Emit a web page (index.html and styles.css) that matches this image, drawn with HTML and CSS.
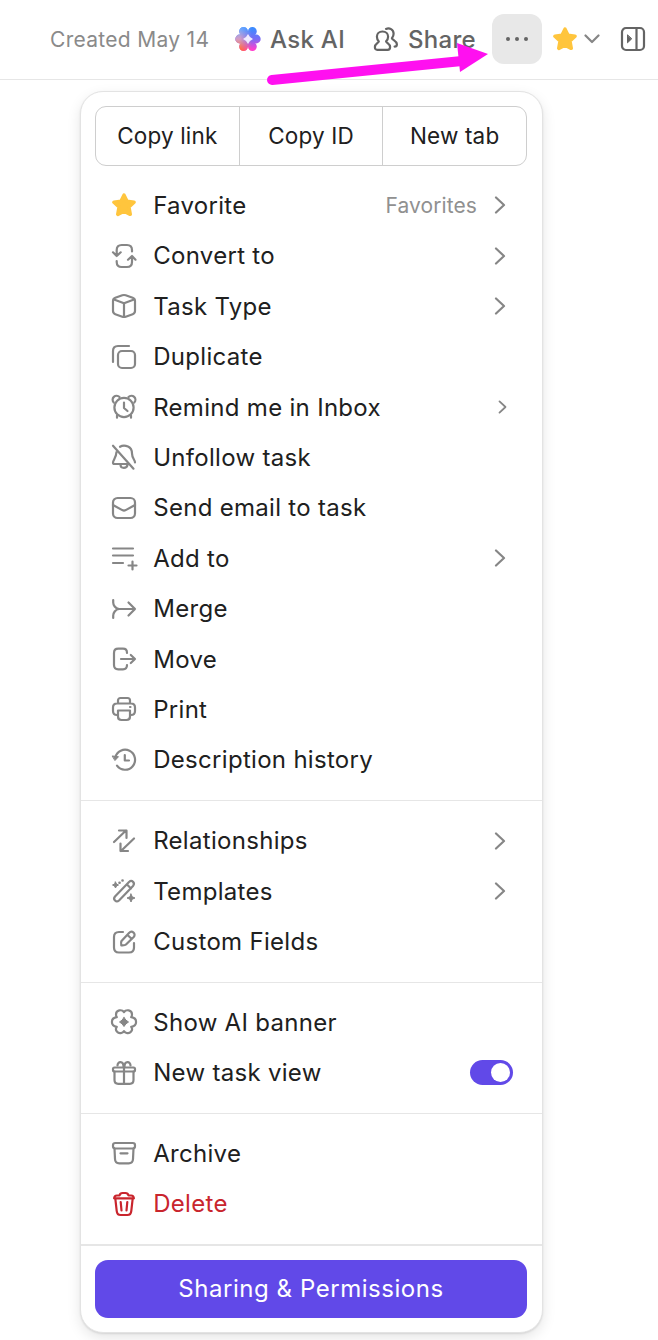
FILE: index.html
```html
<!DOCTYPE html>
<html lang="en">
<head>
    <meta charset="UTF-8">
    <meta name="viewport" content="width=device-width, initial-scale=1.0">
    <title>Task menu</title>
    <link rel="stylesheet" href="styles.css">
</head>
<body>
    <svg class="sprite" width="0" height="0">
        <symbol id="star" viewBox="0 0 24 24"><path d="M12 2.200l3 6.100 7 .9-5.100 4.800 1.300 7.300L12 18.200l-6.200 3.100 1.300-7.300L2 9.200l7-.9z" fill="#ffc53d" stroke="#ffc53d" stroke-width="3.600" stroke-linejoin="round"/></symbol>
        <symbol id="chevron" viewBox="0 0 12 18"><path d="M2 1.500L10 9l-8 7.500"/></symbol>
    </svg>

    <header class="topbar">
        <span class="created">Created May 14</span>
        <button class="top-btn ask">
            <svg class="ai-logo" viewBox="0 0 26 26">
                <defs>
                    <linearGradient id="logo-right" x1="0" y1="0" x2="0" y2="1"><stop offset=".1" stop-color="#3d8bff"/><stop offset=".5" stop-color="#7a6cf6"/><stop offset=".9" stop-color="#ff3fd0"/></linearGradient>
                    <linearGradient id="logo-left" x1="0" y1="0" x2="0" y2="1"><stop offset=".1" stop-color="#6fa8ff"/><stop offset=".5" stop-color="#d49cc4"/><stop offset=".9" stop-color="#ff7038"/></linearGradient>
                    <linearGradient id="logo-fade" x1="0" y1="0" x2="1" y2="0"><stop offset=".2" stop-color="#fff"/><stop offset=".65" stop-color="#000"/></linearGradient>
                    <mask id="logo-mask"><rect width="26" height="26" fill="url(#logo-fade)"/></mask>
                    <clipPath id="petals">
                        <circle cx="13" cy="13" r="7.500"/>
                        <circle cx="8.600" cy="5.400" r="4.400"/>
                        <circle cx="17.400" cy="5.400" r="4.400"/>
                        <circle cx="4.700" cy="13" r="4.400"/>
                        <circle cx="21.300" cy="13" r="4.400"/>
                        <circle cx="8.600" cy="20.600" r="4.400"/>
                        <circle cx="17.400" cy="20.600" r="4.400"/>
                    </clipPath>
                </defs>
                <g clip-path="url(#petals)">
                    <rect width="26" height="26" fill="url(#logo-right)"/>
                    <rect width="26" height="26" fill="url(#logo-left)" mask="url(#logo-mask)"/>
                </g>
                <path d="M13 8q1.500 3.500 5 5-3.500 1.500-5 5-1.500-3.500-5-5 3.500-1.500 5-5z" fill="#efeaff"/>
            </svg>
            Ask AI
        </button>
        <button class="top-btn share">
            <svg class="icon" viewBox="0 0 24 24">
                <path d="M8.500 4.500c3.400 0 5.600 2.500 5.600 5.300 0 2-.8 3.400-2 4.600.4 1.700 4 2.300 4 5.600 0 1.900-.8 2.900-2.500 2.900H3.300C1.700 22.900.9 21.900.9 20c0-3.300 3.500-3.900 3.900-5.600-1.100-1.200-1.900-2.600-1.900-4.600 0-2.800 2.200-5.300 5.600-5.300z"/>
                <path d="M12 1.900c3.400-1.600 7.600.5 7.600 4.900 0 1.900-.7 3.300-1.700 4.500.4 1.700 5 2.600 5 5.900 0 1.500-.8 2.400-2.300 2.400"/>
            </svg>
            Share
        </button>
        <button class="more" aria-label="More"><i></i><i></i><i></i></button>
        <svg class="icon top-star"><use href="#star"/></svg>
        <svg class="top-caret" viewBox="0 0 16 10"><path d="M1.500 1.500L8 8l6.500-6.500"/></svg>
        <svg class="icon top-panel" viewBox="0 0 24 24"><rect x="1" y="1" width="22" height="22" rx="4"/><path d="M15.500 1v22"/><path d="M6.500 8.200v7.600l4-3.800z" fill="currentColor" stroke-width="1"/></svg>
    </header>

    <svg class="pointer" viewBox="0 0 226 46">
        <path d="M6 38L196 19" stroke="#ff10f0" stroke-width="10" stroke-linecap="round"/>
        <path d="M191 1l31 11-28 18z" fill="#ff10f0"/>
    </svg>

    <div class="menu">
        <div class="copy-bar">
            <button>Copy link</button>
            <button>Copy ID</button>
            <button>New tab</button>
        </div>

        <ul class="section first">
            <li><svg class="icon"><use href="#star"/></svg><span>Favorite</span><em>Favorites</em><svg class="chev"><use href="#chevron"/></svg></li>
            <li><svg class="icon" viewBox="0 0 24 24"><path d="M20 7.500V6c0-3.500-1.500-5-5-5H9.700c-3.500 0-5 1.500-5 5v6M1 8.300L4.700 12l4-3.700M4.700 17v1c0 3.500 1.500 5 5 5H15c3.500 0 5-1.500 5-5v-6M16 15.700l4-3.700 3.500 3.700"/></svg><span>Convert to</span><svg class="chev"><use href="#chevron"/></svg></li>
            <li><svg class="icon" viewBox="0 0 24 24"><path d="M10.300 1.300a5 5 0 0 1 3.400 0l7 2.500A3.500 3.500 0 0 1 23 7v10a3.500 3.500 0 0 1-2.300 3.200l-7 2.500a5 5 0 0 1-3.400 0l-7-2.500A3.500 3.500 0 0 1 1 17V7a3.500 3.500 0 0 1 2.300-3.200zM2 5.500L12 9.200l10-3.700M12 9.200V23"/></svg><span>Task Type</span><svg class="chev"><use href="#chevron"/></svg></li>
            <li><svg class="icon" viewBox="0 0 24 24"><rect x="6" y="6" width="17" height="17" rx="4"/><path d="M1 17V6c0-3.500 1.500-5 5-5h11"/></svg><span>Duplicate</span></li>
            <li><svg class="icon" viewBox="0 0 24 24"><circle cx="12" cy="12.500" r="9.600"/><path d="M12 7.500V13l3.500 3M1.700 7.500A3.500 3.500 0 0 1 7.500 2M22.300 7.500A3.500 3.500 0 0 0 16.500 2M5 20.500v2.200M19 20.500v2.200"/></svg><span>Remind me in Inbox</span><svg class="chev small"><use href="#chevron"/></svg></li>
            <li><svg class="icon" viewBox="0 0 24 24"><path d="M1 .7l20.500 23M8 1.800c2.200-1.300 5.500-1.300 8-.2 2.800 1.400 4 3.800 4 6.900 0 4.700 3 6.200 3 9M4.500 7c-.3 5.500-3.500 8.300-3.500 10.500 0 1.100.7 1.500 1.500 1.500h14M8.500 20c.3 3.800 6.200 3.800 7 0"/></svg><span>Unfollow task</span></li>
            <li><svg class="icon" viewBox="0 0 24 24"><rect x="1" y="2" width="22" height="20" rx="4.500"/><path d="M1 9l9.300 5.100c1.200.6 2.200.6 3.400 0L23 9"/></svg><span>Send email to task</span></li>
            <li><svg class="icon" viewBox="0 0 24 24"><path d="M1 2.500h20M1 9.500h20M1 17h10M20.500 15.500v8M16.500 19.500h8"/></svg><span>Add to</span><svg class="chev"><use href="#chevron"/></svg></li>
            <li><svg class="icon" viewBox="0 0 24 24"><path d="M1.200 3v2.500c0 2 2 6.500 6 6.500H23M1.200 21v-2.500c0-2 2-6.500 6-6.500M16.500 5.500L23 12l-6.500 6.500"/></svg><span>Merge</span></li>
            <li><svg class="icon" viewBox="0 0 24 24"><path d="M15 6c0-3-1.200-4.300-4-4.300H6.300C3.500 1.700 2 3 2 6v12c0 3 1.500 4.300 4.300 4.300H11c2.800 0 4-1.300 4-4.300M9 12h14M18.800 8l4.200 4-4.200 4"/></svg><span>Move</span></li>
            <li><svg class="icon" viewBox="0 0 24 24"><path d="M6 6V3.500C6 2 7 1 8.500 1h7C17 1 18 2 18 3.500V6M5 18c-2.700 0-4-1.300-4-4v-3.500C1 7.500 2.500 6.500 5 6.500h14c2.500 0 4 1 4 4V14c0 2.700-1.300 4-4 4"/><path d="M6 13.500h12v6c0 2.300-1.200 3.500-3.500 3.500h-5C7.200 23 6 21.800 6 19.500zM18 10h.5"/></svg><span>Print</span></li>
            <li><svg class="icon" viewBox="0 0 24 24"><path d="M3.300 9.500A10 10 0 1 1 5 17.700M12.800 7v5.500H17"/><path d="M.5 8l6 .7-3.300 3.600z" fill="currentColor" stroke-width="1"/></svg><span>Description history</span></li>
        </ul>

        <ul class="section">
            <li><svg class="icon" viewBox="0 0 24 24"><path d="M2 13L14 1.500M7 1.500h7.500V9M22 9.500L9 22M8.500 14.500V22H16"/></svg><span>Relationships</span><svg class="chev"><use href="#chevron"/></svg></li>
            <li><svg class="icon" viewBox="0 0 24 24"><path d="M3 17.500L17 3c3-2.700 6.500 1 4 4L7 21.500c-2.800 2.500-6.500-1-4-4zM15 5.500l4 4"/><path d="M3.500 3l1 2 2 1-2 1-1 2-1-2-2-1 2-1zM19 15l1.200 2.800L23 19l-2.800 1.200L19 23l-1.200-2.800L15 19l2.800-1.200z" fill="currentColor" stroke-width="1"/><path d="M10.500 1.500h.1M7.500 3.800h.1" stroke-width="2.600"/></svg><span>Templates</span><svg class="chev"><use href="#chevron"/></svg></li>
            <li><svg class="icon" viewBox="0 0 24 24"><path d="M11 2H7C3.500 2 2 3.500 2 7v10.500C2 21 3.500 22.500 7 22.500h10c3.500 0 5-1.500 5-5V13M9.500 11L17 3c3-3.200 7.500.8 4.700 4L14 14.500c-1 1-2.500.8-4.700.8-.3-1.500-.5-3.300.2-4.300zM15.500 5l4.300 4"/></svg><span>Custom Fields</span></li>
        </ul>

        <ul class="section short">
            <li><svg class="icon wide" viewBox="-1 -1 26 26"><path d="M12 2.200C14-.8 20-.4 20 4.500c0 1.200-.3 2-.8 2.700 6.500.8 6.500 8.800 0 9.600 2.500 3.400-1.200 7.200-4.500 6.200-1.200-.3-2.100-1-2.700-1.800-.6.800-1.500 1.500-2.700 1.800-3.300 1-7-2.800-4.500-6.200-6.500-.8-6.500-8.800 0-9.600C4.300 6.500 4 5.700 4 4.500 4-.4 10-.8 12 2.200z"/><path d="M12 7.500q1.500 3 4.500 4.500-3 1.500-4.500 4.500Q10.500 13.500 7.500 12 10.500 10.500 12 7.500z" fill="currentColor" stroke-width="1"/></svg><span>Show AI banner</span></li>
            <li><svg class="icon" viewBox="0 0 24 24"><rect x="1" y="6.500" width="22" height="4" rx="1.500"/><path d="M2.500 10.500V19c0 2.500 1.200 3.800 3.700 3.800h11.600c2.500 0 3.700-1.300 3.700-3.800v-8.500M12 6v16.500M11.500 5.500C11.500-.3 5.500 0 5.500 4.500M12.500 5.500C12.500-.3 18.500 0 18.500 4.500"/></svg><span>New task view</span><i class="toggle"></i></li>
        </ul>

        <ul class="section short">
            <li><svg class="icon" viewBox="0 0 24 24"><rect x="1" y="2" width="22" height="5.500" rx="2.200"/><path d="M2.500 7.500L3 18c.1 3 1.500 4.300 4.300 4.300h9.400c2.800 0 4.200-1.300 4.300-4.300l.5-10.500M8.500 12.300h7"/></svg><span>Archive</span></li>
            <li class="danger"><svg class="icon" viewBox="0 0 24 24"><path d="M7.500 3.500C8 1.500 9 1 10.500 1h3c1.500 0 2.500.5 3 2.500h2.700c1.500 0 2.500.7 2.700 2.800H2.100c.2-2.100 1.200-2.800 2.700-2.800zM3.300 6.500l1.400 12.300C5 21.800 6.200 23 8.600 23h6.800c2.400 0 3.600-1.200 3.900-4.200L20.700 6.500M8.700 10l.8 8.500M15.300 10l-.8 8.500"/></svg><span>Delete</span></li>
        </ul>

        <div class="footer">
            <button class="primary">Sharing &amp; Permissions</button>
        </div>
    </div>
</body>
</html>
```
FILE: styles.css
```css
* {
    box-sizing: border-box;
}
body {
    margin: 0;
    height: 1340px;
    overflow: hidden;
    background-color: #fff;
    font-family: Inter, "Liberation Sans", sans-serif;
    font-size: 24px;
    letter-spacing: 0.3px;
    color: #202020;
}
button {
    border: 0;
    padding: 0;
    background: none;
    font: inherit;
    letter-spacing: inherit;
    color: inherit;
}
svg {
    display: block;
    flex: none;
    fill: none;
    stroke: currentColor;
    stroke-width: 2.2;
    stroke-linecap: round;
    stroke-linejoin: round;
}
.sprite {
    position: absolute;
}
.icon {
    width: 24px;
    height: 24px;
    overflow: visible;
}

/* Top bar */
.topbar {
    display: flex;
    align-items: center;
    height: 80px;
    padding: 0 0 1px 50px;
    border-bottom: 1px solid #e6e6e6;
    color: #646464;
    white-space: nowrap;
}
.created {
    width: 185px;
    font-size: 21px;
    color: #8a8a8a;
}
.top-btn {
    display: flex;
    align-items: center;
    font-weight: 500;
}
.ask {
    width: 139px;
    gap: 9px;
}
.share {
    width: 118px;
    gap: 10px;
}
.ai-logo {
    width: 26px;
    height: 26px;
    stroke: none;
}
.more {
    display: flex;
    align-items: center;
    justify-content: center;
    gap: 5px;
    width: 50px;
    height: 50px;
    border-radius: 12px;
    background-color: #e8e8e8;
}
.more i {
    width: 4px;
    height: 4px;
    border-radius: 50%;
    background-color: #646464;
}
.top-star {
    margin-left: 10.5px;
}
.top-caret {
    width: 16px;
    height: 10px;
    margin-left: 7px;
    color: #868686;
}
.top-panel {
    margin-left: 21px;
}

/* Arrow drawn over the page */
.pointer {
    position: absolute;
    left: 266px;
    top: 42px;
    width: 226px;
    height: 46px;
    stroke: none;
}

/* Dropdown menu */
.menu {
    width: 463px;
    margin: 11px 0 0 80px;
    border: 1px solid #e3e3e3;
    border-radius: 23px;
    background-color: #fff;
    box-shadow: 0 5px 14px rgba(0, 0, 0, 0.1), 0 1px 2px rgba(0, 0, 0, 0.1);
}
.copy-bar {
    display: flex;
    height: 60px;
    margin: 14px 15px 0 14px;
    border: 1px solid #cecece;
    border-radius: 11px;
}
.copy-bar button {
    flex: 1;
    padding-bottom: 2px;
    font-size: 22.5px;
    letter-spacing: 0.15px;
}
.copy-bar button + button {
    border-left: 1px solid #cecece;
}
.section {
    margin: 0;
    padding: 15px 29px 14.8px 31.4px;
    list-style: none;
    border-bottom: 1px solid #e6e6e6;
}
.first {
    padding-top: 14.3px;
}
.short {
    padding-top: 14.5px;
    padding-bottom: 14.7px;
}
.section li {
    display: flex;
    align-items: center;
    height: 50.4px;
    white-space: nowrap;
}
.section .icon {
    margin-right: 16.8px;
    color: #868686;
}
.section .wide {
    width: 26px;
    height: 26px;
    margin: 0 15.8px 0 -1px;
}
.section em {
    margin-left: auto;
    font-size: 21px;
    font-style: normal;
    letter-spacing: 0.1px;
    color: #909090;
}
.chev {
    width: 12px;
    height: 18px;
    margin: 0 7.5px 0 auto;
    color: #868686;
}
em + .chev {
    margin-left: 16.5px;
}
.small {
    width: 9px;
    height: 14px;
    margin-right: 6.5px;
    stroke-width: 2.4;
}
.toggle {
    width: 43px;
    height: 25px;
    margin-left: auto;
    padding: 3px;
    border-radius: 13px;
    background-color: #6149e8;
}
.toggle::before {
    content: "";
    display: block;
    width: 19px;
    height: 19px;
    margin-left: 18px;
    border-radius: 50%;
    background-color: #fff;
}
.section .danger,
.section .danger .icon {
    color: #c9252d;
}
.footer {
    padding: 14px 15px 14px 14px;
    border-top: 1px solid #e6e6e6;
}
.primary {
    width: 100%;
    height: 58px;
    border-radius: 13px;
    background-color: #6149e8;
    color: #fff;
    letter-spacing: 0.55px;
}
```
